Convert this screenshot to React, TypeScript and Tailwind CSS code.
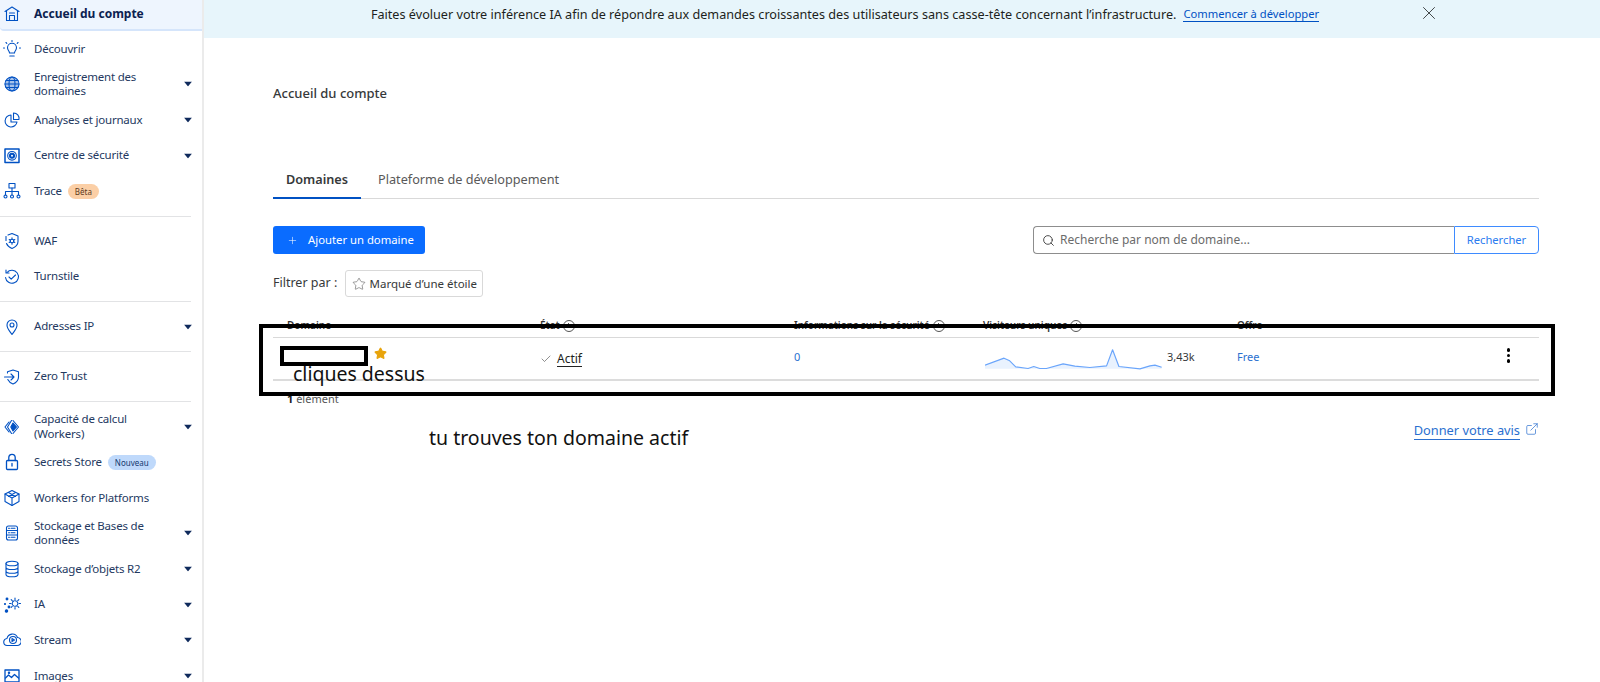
import React from "react";
import { Search, X, Plus, Star, Check, ExternalLink } from "lucide-react";

const I = ({ children }: { children: React.ReactNode }) => (
  <svg width="18" height="18" viewBox="0 0 18 18" fill="none" stroke="#0051c3" strokeWidth="1.1" strokeLinecap="round" strokeLinejoin="round" className="shrink-0">
    {children}
  </svg>
);

const icons: Record<string, React.ReactNode> = {
  home: <><path d="M2 6.500 9 2l7 4.500" /><path d="M3.500 6v9.500h11V6" /><path d="M6.500 15V10.500h5V15" /><path d="M6.500 8h5" /></>,
  bulb: <><path d="M6.500 13c0-2-2-2.600-2-5.200a4.500 4.500 0 0 1 9 0c0 2.600-2 3.200-2 5.200z" /><path d="M6.800 16h4.400M9 .500v1M1.500 8H.500M17.500 8h-1M3 2.500l.8.800M15 2.500l-.8.800" /></>,
  globe: <><circle cx="9" cy="9" r="7" fill="#0051c3" fillOpacity=".35" /><ellipse cx="9" cy="9" rx="3" ry="7" /><path d="M2 9h14M3 5.500h12M3 12.500h12" /></>,
  pie: <><path d="M8 4a6 6 0 1 0 6 7H8z" /><path d="M10.500 2a5.500 5.500 0 0 1 5.500 6.500h-5.500z" /></>,
  vault: <><rect x="2" y="2" width="14" height="13.500" strokeWidth="1.500" /><circle cx="9" cy="8.800" r="4.300" /><circle cx="9" cy="8.800" r="2.500" fill="#0051c3" /><circle cx="9" cy="8.800" r="1" fill="#fff" stroke="none" /></>,
  tree: <><rect x="6" y="1.500" width="6" height="4.500" /><path d="M9 6v3.500M2.500 13V9.500h13V13M9 9.500V13" /><circle cx="2.500" cy="14.500" r="1.500" /><circle cx="9" cy="14.500" r="1.500" /><circle cx="15.500" cy="14.500" r="1.500" /></>,
  waf: <><path d="M5 3 9 1.500 15 4v5.500c0 3-2.500 5.500-6 7-2.500-1-4.500-2.500-5.500-5" /><path d="M3 4.500v4" /><circle cx="9" cy="9" r="1.800" /><path d="M9 5.800v1.400M9 10.800v1.400M6.200 7.500l1.200.7M10.600 9.800l1.200.7M6.200 10.500l1.200-.7M10.600 8.200l1.200-.7" /></>,
  turn: <><path d="M4 4.500a6.500 6.500 0 1 1-1.500 5" /><path d="M3 2v3h3" /><path d="m6 9 2.200 2.200L12.500 7" /></>,
  pin: <><path d="M9 16.500C6.500 13 4 10.500 4 7a5 5 0 0 1 10 0c0 3.500-2.500 6-5 9.500z" /><circle cx="9" cy="7" r="2" /></>,
  zero: <><path d="M4.500 5V3.800L10 2l5.500 1.800V9c0 3.500-2.500 5.800-5.500 7-2.200-.9-4.200-2.400-5.200-4.500" /><path d="M1.500 9h9M8 6l3 3-3 3" /></>,
  workers: <><path d="M6 4 2 9l4 5M8.500 2.500 4.500 9l4 6.500M10 2.500l5.500 6.500-5.500 6.500" /><path d="M10 5l3.500 4-3.500 4-2.200-4z" fill="#0051c3" /></>,
  lock: <><rect x="3.500" y="7.500" width="11" height="9" rx="1" strokeWidth="1.300" /><path d="M5.800 7.500V4.500a3.200 3.200 0 0 1 6.400 0v3M9 10.500v2.500" strokeWidth="1.300" /></>,
  box: <><path d="m9 1.500 7 3.500v7.500L9 16.500 2 12.500V5z" /><path d="m2 5 7 4 7-4M9 9v7.500" /><path d="m5.500 3.500 7 4M12.500 3.500l-7 4" /></>,
  db: <><rect x="3.500" y="2" width="11" height="14" rx="2" /><path d="M3.500 6.500h11M3.500 11h11" /><path d="M5.500 4.300h1M8 4.300h4M5.500 8.800h1M8 8.800h4M5.500 13.300h1M8 13.300h4" /></>,
  r2: <><ellipse cx="9" cy="3.500" rx="6" ry="2.300" /><path d="M3 3.500v11c0 1.300 2.700 2.300 6 2.300s6-1 6-2.300v-11M3 7.200c0 1.300 2.700 2.300 6 2.300s6-1 6-2.300M3 10.900c0 1.300 2.700 2.300 6 2.300s6-1 6-2.300" /></>,
  ai: <><circle cx="12" cy="7.500" r="2.800" strokeDasharray="1.500 1" /><path d="M12 2v1.500M12 11.500V13M6.500 7.500H8M16 7.500h1.500M8.200 3.700l1 1M14.800 10.300l1 1M15.800 3.700l-1 1M9.200 10.300l-1 1" /><circle cx="4" cy="3" r=".9" fill="#0051c3" /><circle cx="6" cy="11" r=".9" fill="#0051c3" /><circle cx="2" cy="8" r=".5" fill="#0051c3" /><circle cx="3.500" cy="15" r="1.200" fill="#0051c3" /></>,
  stream: <><path d="M4.500 14.500a3.500 3.500 0 0 1-.5-7 5.500 5.500 0 0 1 10.500-1 4 4 0 0 1-.5 8z" /><circle cx="10" cy="9" r="3.500" /><path d="M9 7.500v3l2.500-1.500z" /></>,
  images: <><rect x="2" y="3" width="14" height="12" strokeWidth="1.300" /><path d="m2.500 11 3-3 3 2.500 3-3 4 3.500" strokeWidth="1.300" /><circle cx="6" cy="5.800" r=".7" fill="#0051c3" /></>,
};

const Caret = () => (
  <svg width="8" height="5" viewBox="0 0 8 5" className="absolute right-[10px] top-1/2 -translate-y-1/2">
    <path d="M0 0h8L4 5z" fill="#0f2a5c" />
  </svg>
);

const Item = ({ icon, label, caret, badge, badgeClass }: { icon: string; label: React.ReactNode; caret?: boolean; badge?: string; badgeClass?: string }) => (
  <div className="relative flex h-[35.6px] items-center pl-[3px] pr-[28px] text-[11.5px] leading-[14.5px] tracking-[-0.2px] text-[#24395f]">
    <span className="flex w-[31px] shrink-0"><I>{icons[icon]}</I></span>
    <span>{label}</span>
    {badge && <span className={`ml-[6px] rounded-full px-[7px] py-[1px] text-[8px] leading-[13px] tracking-normal ${badgeClass}`}>{badge}</span>}
    {caret && <Caret />}
  </div>
);

const Hr = () => <div className="my-[6.7px] mr-[11px] border-t border-[#e2e3e5]" />;

const Info = () => (
  <span className="inline-flex h-[12px] w-[12px] items-center justify-center rounded-full border border-[#555]">
    <span className="h-[5px] w-[1px] bg-[#555]" />
  </span>
);

const Th = ({ children, className }: { children: React.ReactNode; className: string }) => (
  <div className={`flex items-center gap-[3px] font-semibold ${className}`}>{children}</div>
);

export default function App() {
  return (
    <div className="relative flex h-[682px] w-[1600px] overflow-hidden bg-white font-['Noto_Sans',sans-serif] text-[#36393a]">
      <aside className="h-[682px] w-[204px] shrink-0 overflow-hidden border-r-2 border-[#ebebeb]">
        <div className="flex h-[31px] items-center rounded-bl-[4px] border-b-2 border-[#d5e5fb] bg-[#eef5fe] pb-[1px] pl-[3px] text-[12px] font-bold text-[#0b2150]">
          <span className="flex w-[31px]"><I>{icons.home}</I></span>Accueil du compte
        </div>
        <Item icon="bulb" label="Découvrir" />
        <Item icon="globe" label={<>Enregistrement des<br />domaines</>} caret />
        <Item icon="pie" label="Analyses et journaux" caret />
        <Item icon="vault" label="Centre de sécurité" caret />
        <Item icon="tree" label="Trace" badge="Bêta" badgeClass="bg-[#fbcfa6] text-[#5c3a1e]" />
        <Hr />
        <Item icon="waf" label="WAF" />
        <Item icon="turn" label="Turnstile" />
        <Hr />
        <Item icon="pin" label="Adresses IP" caret />
        <Hr />
        <Item icon="zero" label="Zero Trust" />
        <Hr />
        <Item icon="workers" label={<>Capacité de calcul<br />(Workers)</>} caret />
        <Item icon="lock" label="Secrets Store" badge="Nouveau" badgeClass="bg-[#bfd9fb] text-[#14386e]" />
        <Item icon="box" label="Workers for Platforms" />
        <Item icon="db" label={<>Stockage et Bases de<br />données</>} caret />
        <Item icon="r2" label="Stockage d’objets R2" caret />
        <Item icon="ai" label="IA" caret />
        <Item icon="stream" label="Stream" caret />
        <Item icon="images" label="Images" caret />
      </aside>

      <main className="min-w-0 flex-1">
        <div className="relative flex h-[38px] items-center justify-center bg-[#e7f5fb] pb-[10px] text-[12.65px] text-[#1d1f20]">
          <div className="ml-[-114px] flex items-center">
            <span>Faites évoluer votre inférence IA afin de répondre aux demandes croissantes des utilisateurs sans casse-tête concernant l’infrastructure.</span>
            <a className="ml-[7px] border-b border-[#0051c3] text-[11.2px] leading-[15px] text-[#0051c3]">Commencer à développer</a>
          </div>
          <X size={22} strokeWidth={1} className="absolute right-[160px] top-[2px] text-[#36393a]" />
        </div>

        <div className="pl-[69px] pr-[61px]">
          <h1 className="mt-[46px] text-[13px] font-medium leading-[18px] text-[#36393a]">Accueil du compte</h1>

          <div className="mt-[57px] flex h-[40px] border-b border-[#d9d9d9] text-[12.7px]">
            <div className="mb-[-1px] flex w-[88px] justify-center border-b-2 border-[#0051c3] pt-[11px] font-semibold">Domaines</div>
            <div className="ml-[17px] pt-[11px] text-[#595959]">Plateforme de développement</div>
          </div>

          <div className="mt-[27px] flex justify-between">
            <button className="flex h-[28px] w-[152px] items-center rounded-[3px] bg-[#0a6cff] pl-[14px] text-[11.3px] text-white">
              <Plus size={11} strokeWidth={1.2} className="mr-[10px]" />Ajouter un domaine
            </button>
            <div className="flex h-[28px] w-[506px] text-[12px]">
              <div className="flex flex-1 items-center rounded-l-[4px] border border-r-0 border-[#8d8d8d] pl-[8px] text-[#6b6b6b]">
                <Search size={13} strokeWidth={1.6} className="mr-[5px] text-[#333]" />Recherche par nom de domaine...
              </div>
              <div className="flex w-[85px] items-center justify-center rounded-r-[4px] border border-[#3e8bff] text-[11.2px] text-[#2b7cf0]">Rechercher</div>
            </div>
          </div>

          <div className="mt-[16px] flex items-center text-[12.5px]">
            <span>Filtrer par :</span>
            <span className="ml-[8px] flex h-[27px] w-[138px] items-center justify-center rounded-[3px] border border-[#d9d9d9] text-[11.5px]">
              <Star size={14} strokeWidth={1} className="mr-[4px] text-[#555]" />Marqué d’une étoile
            </span>
          </div>

          <div className="mt-[18px] flex h-[23px] items-center border-b border-[#d9d9d9] pb-[1px] text-[10px] text-[#333]">
            <Th className="w-[267px] pl-[14px]">Domaine</Th>
            <Th className="w-[254px]">État <Info /></Th>
            <Th className="w-[189px]">Informations sur la sécurité <Info /></Th>
            <Th className="w-[254px]">Visiteurs uniques <Info /></Th>
            <Th className="">Offre</Th>
          </div>
          <div className="flex h-[43px] items-center border-b-2 border-[#dcdcdc] text-[11px]">
            <div className="flex w-[267px] items-center pl-[101px]">
              <Star size={13} fill="#e8a40c" stroke="#e8a40c" className="mt-[-11px]" />
            </div>
            <div className="flex w-[254px] items-center text-[12px]">
              <Check size={12} strokeWidth={1.2} className="mr-[5px] text-[#444]" />
              <span className="mt-[1px] border-b border-[#222] leading-[15px] text-[#1d1f20]">Actif</span>
            </div>
            <div className="mt-[-3px] w-[189px] text-[#2a6fcf]">0</div>
            <div className="flex w-[254px] items-center">
              <svg width="177" height="27" viewBox="646 100 530 80" className="ml-[2px] mt-[-2px] shrink-0">
                <path d="M646 163L703 142L720 150L738 168L775 173L792 167L810 173L830 173L880 159L915 166L960 170L1010 165L1028 117L1047 167L1110 174L1140 165L1155 163L1175 169V174H646Z" fill="#e9f2fe" />
                <path d="M646 163L703 142L720 150L738 168L775 173L792 167L810 173L830 173L880 159L915 166L960 170L1010 165L1028 117L1047 167L1110 174L1140 165L1155 163L1175 169" fill="none" stroke="#6aa5fb" strokeWidth="3.5" strokeLinejoin="round" />
              </svg>
              <span className="ml-[5px] mt-[-3px] text-[#36393a]">3,43k</span>
            </div>
            <div className="mt-[-3px] flex-1 text-[#2a6fcf]">Free</div>
            <div className="mr-[29px] mt-[-6px] flex flex-col gap-[2px]">
              <span className="h-[3.5px] w-[3.5px] rounded-full bg-black" />
              <span className="h-[3.5px] w-[3.5px] rounded-full bg-black" />
              <span className="h-[3.5px] w-[3.5px] rounded-full bg-black" />
            </div>
          </div>

          <div className="mt-[10px] pl-[14px] text-[11px] leading-[16px] text-[#555]"><b className="text-[#222]">1</b> élément</div>

          <div className="mt-[15px] flex justify-end text-[12.8px] text-[#2a6fcf]">
            <span className="border-b border-[#2a6fcf] leading-[17px]">Donner votre avis</span>
            <ExternalLink size={14} strokeWidth={1.2} className="ml-[5px]" />
          </div>
        </div>
      </main>

      <div className="pointer-events-none absolute left-[259px] top-[324px] h-[72px] w-[1296px] border-[4px] border-black" />
      <div className="pointer-events-none absolute left-[280px] top-[346px] h-[20px] w-[88px] border-[4px] border-black bg-white" />
      <div className="absolute left-[293px] top-[361px] text-[19.5px] leading-[25px] text-[#111]">cliques dessus</div>
      <div className="absolute left-[429px] top-[425px] text-[19.5px] leading-[25px] text-[#111]">tu trouves ton domaine actif</div>
    </div>
  );
}
